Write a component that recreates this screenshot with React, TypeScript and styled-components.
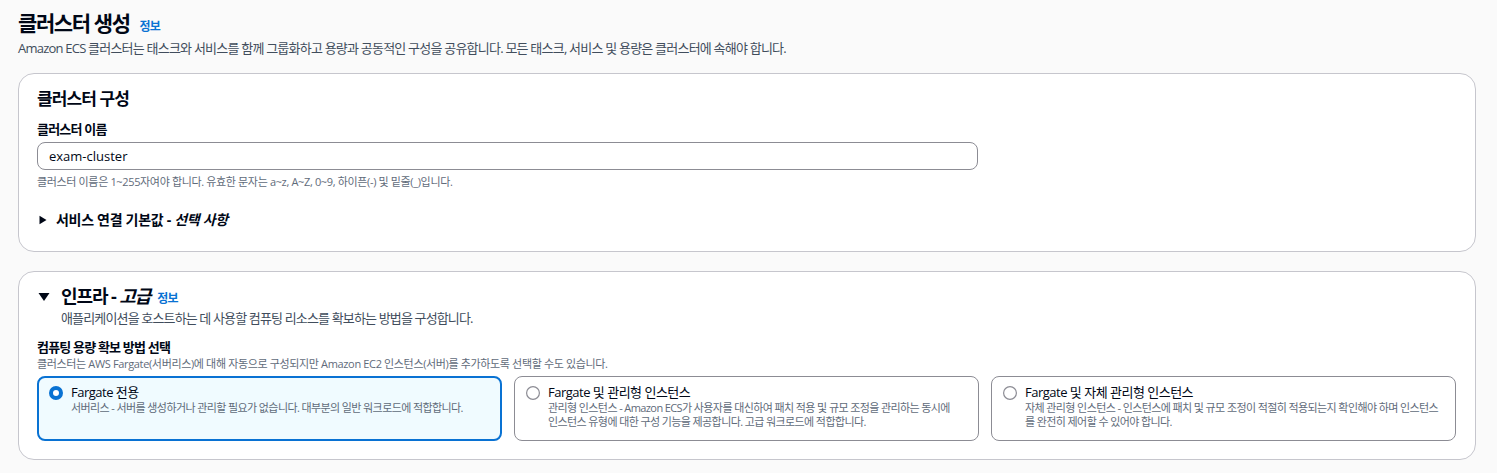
import React from "react";
import styled, { createGlobalStyle, css } from "styled-components";

const GlobalStyle = createGlobalStyle`
  html, body {
    margin: 0;
    padding: 0;
    background: #fafafa;
  }
  body {
    font-family: "Open Sans", "Noto Sans CJK KR", sans-serif;
    color: #000716;
    -webkit-font-smoothing: antialiased;
  }
  * { box-sizing: border-box; }
`;

const Page = styled.div`
  padding: 8px 21px 12px 18px;
  display: flex;
  flex-direction: column;
`;

const PageHeader = styled.header`
  display: flex;
  flex-direction: column;
`;

const TitleRow = styled.div`
  display: flex;
  align-items: baseline;
  gap: 10px;
`;

const H1 = styled.h1`
  margin: 0;
  font-size: 21px;
  line-height: 30px;
  font-weight: 700;
  letter-spacing: -1.4px;
`;

const InfoLink = styled.a`
  color: #0972d3;
  font-size: 12px;
  font-weight: 700;
  text-decoration: none;
  letter-spacing: -0.8px;
  cursor: pointer;
`;

const Lead = styled.p`
  margin: 0;
  font-size: 13px;
  line-height: 20px;
  color: #414d5c;
  letter-spacing: -0.78px;
`;

const Panel = styled.section<{ $top: number; $bottom: number }>`
  margin-top: ${(p) => p.$top}px;
  background: #ffffff;
  border: 1px solid #c6c6cd;
  border-radius: 16px;
  padding: 14px 19px ${(p) => p.$bottom}px 18px;
  display: flex;
  flex-direction: column;
`;

const H2 = styled.h2`
  margin: 0;
  font-size: 17px;
  line-height: 22px;
  font-weight: 700;
  letter-spacing: -0.9px;
`;

const Label = styled.label<{ $mt: number; $lh: number }>`
  margin-top: ${(p) => p.$mt}px;
  font-size: 13px;
  line-height: ${(p) => p.$lh}px;
  font-weight: 700;
  letter-spacing: -0.8px;
`;

const Input = styled.input`
  margin-top: 3px;
  width: 941px;
  height: 28px;
  border: 1px solid #8c8c94;
  border-radius: 8px;
  padding: 0 11px;
  font-family: "Open Sans", "Noto Sans CJK KR", sans-serif;
  font-size: 13px;
  color: #000716;
  background: #fff;
  outline: none;
`;

const Hint = styled.div<{ $mt?: number }>`
  margin-top: ${(p) => p.$mt ?? 0}px;
  font-size: 11px;
  line-height: 16px;
  color: #5f6b7a;
  letter-spacing: -0.35px;
`;

const ExpanderRow = styled.div`
  margin-top: 20px;
  display: flex;
  align-items: center;
  gap: 9px;
  padding-left: 2px;
  font-size: 14px;
  line-height: 20px;
  font-weight: 700;
  letter-spacing: -0.3px;
  cursor: pointer;
`;

const Em = styled.em`
  font-style: italic;
`;

const SectionHeaderRow = styled.div`
  display: flex;
  align-items: center;
  height: 22px;
  gap: 10px;
`;

const Caret = styled.span`
  width: 14px;
  display: inline-flex;
  justify-content: center;
`;

const H2Large = styled.h2`
  margin: 0;
  font-size: 18px;
  line-height: 22px;
  font-weight: 700;
  letter-spacing: -1.1px;
  display: flex;
  align-items: baseline;
  gap: 7px;
`;

const Indented = styled.div`
  padding-left: 24px;
  font-size: 13px;
  line-height: 20px;
  color: #414d5c;
  letter-spacing: -0.85px;
`;

const TileGrid = styled.div`
  margin-top: 4px;
  display: grid;
  grid-template-columns: repeat(3, 1fr);
  gap: 12px;
`;

const Tile = styled.div<{ $selected?: boolean }>`
  display: flex;
  gap: 8px;
  border-radius: 8px;
  min-height: 65px;
  cursor: pointer;
  ${(p) =>
    p.$selected
      ? css`
          border: 2px solid #0972d3;
          background: #f0fbff;
          padding: 5px 11px 10px 10px;
        `
      : css`
          border: 1px solid #8c8c94;
          background: #ffffff;
          padding: 6px 12px 11px 11px;
        `}
`;

const RadioWrap = styled.span`
  flex: none;
  width: 14px;
  height: 18px;
  display: flex;
  align-items: center;
  margin-top: 1px;
`;

const TileBody = styled.div`
  display: flex;
  flex-direction: column;
`;

const TileTitle = styled.div`
  font-size: 13px;
  line-height: 18px;
  color: #000716;
  letter-spacing: -0.5px;
`;

const TileDesc = styled.div<{ $keepWords?: boolean }>`
  font-size: 11px;
  line-height: 14px;
  color: #5f6b7a;
  letter-spacing: -0.6px;
  word-break: ${(p) => (p.$keepWords ? "keep-all" : "normal")};
`;

const CaretRight = () => (
  <svg width="8" height="10" viewBox="0 0 8 10" aria-hidden>
    <path d="M0.5 0.8 L7.5 5 L0.5 9.2 Z" fill="#000716" />
  </svg>
);

const CaretDown = () => (
  <svg width="12" height="10" viewBox="0 0 12 10" aria-hidden>
    <path d="M0.5 1 L11.5 1 L6 9 Z" fill="#000716" />
  </svg>
);

const Radio = ({ checked }: { checked?: boolean }) => (
  <svg width="14" height="14" viewBox="0 0 14 14" aria-hidden>
    {checked ? (
      <circle cx="7" cy="7" r="5" fill="#ffffff" stroke="#0972d3" strokeWidth="4" />
    ) : (
      <circle cx="7" cy="7" r="6.4" fill="#ffffff" stroke="#8c8c94" strokeWidth="1.2" />
    )}
  </svg>
);

const tiles = [
  {
    title: "Fargate 전용",
    desc: "서버리스 - 서버를 생성하거나 관리할 필요가 없습니다. 대부분의 일반 워크로드에 적합합니다.",
    selected: true,
  },
  {
    title: "Fargate 및 관리형 인스턴스",
    desc: "관리형 인스턴스 - Amazon ECS가 사용자를 대신하여 패치 적용 및 규모 조정을 관리하는 동시에 인스턴스 유형에 대한 구성 기능을 제공합니다. 고급 워크로드에 적합합니다.",
    keepWords: true,
  },
  {
    title: "Fargate 및 자체 관리형 인스턴스",
    desc: "자체 관리형 인스턴스 - 인스턴스에 패치 및 규모 조정이 적절히 적용되는지 확인해야 하며 인스턴스를 완전히 제어할 수 있어야 합니다.",
  },
];

export default function App() {
  return (
    <>
      <GlobalStyle />
      <Page>
        <PageHeader>
          <TitleRow>
            <H1>클러스터 생성</H1>
            <InfoLink>정보</InfoLink>
          </TitleRow>
          <Lead>
            Amazon ECS 클러스터는 태스크와 서비스를 함께 그룹화하고 용량과 공동적인 구성을 공유합니다. 모든 태스크, 서비스 및 용량은 클러스터에 속해야 합니다.
          </Lead>
        </PageHeader>

        <Panel $top={15} $bottom={21}>
          <H2>클러스터 구성</H2>
          <Label $mt={9} $lh={20}>클러스터 이름</Label>
          <Input defaultValue="exam-cluster" />
          <Hint $mt={4}>
            클러스터 이름은 1~255자여야 합니다. 유효한 문자는 a~z, A~Z, 0~9, 하이픈(-) 및 밑줄(_)입니다.
          </Hint>
          <ExpanderRow>
            <CaretRight />
            <span>
              서비스 연결 기본값 - <Em>선택 사항</Em>
            </span>
          </ExpanderRow>
        </Panel>

        <Panel $top={19} $bottom={18}>
          <SectionHeaderRow>
            <Caret>
              <CaretDown />
            </Caret>
            <H2Large>
              <span>
                인프라 - <Em>고급</Em>
              </span>
              <InfoLink>정보</InfoLink>
            </H2Large>
          </SectionHeaderRow>
          <Indented>애플리케이션을 호스트하는 데 사용할 컴퓨팅 리소스를 확보하는 방법을 구성합니다.</Indented>
          <Label $mt={10} $lh={18}>컴퓨팅 용량 확보 방법 선택</Label>
          <Hint>
            클러스터는 AWS Fargate(서버리스)에 대해 자동으로 구성되지만 Amazon EC2 인스턴스(서버)를 추가하도록 선택할 수도 있습니다.
          </Hint>
          <TileGrid>
            {tiles.map((t) => (
              <Tile key={t.title} $selected={t.selected}>
                <RadioWrap>
                  <Radio checked={t.selected} />
                </RadioWrap>
                <TileBody>
                  <TileTitle>{t.title}</TileTitle>
                  <TileDesc $keepWords={t.keepWords}>{t.desc}</TileDesc>
                </TileBody>
              </Tile>
            ))}
          </TileGrid>
        </Panel>
      </Page>
    </>
  );
}
